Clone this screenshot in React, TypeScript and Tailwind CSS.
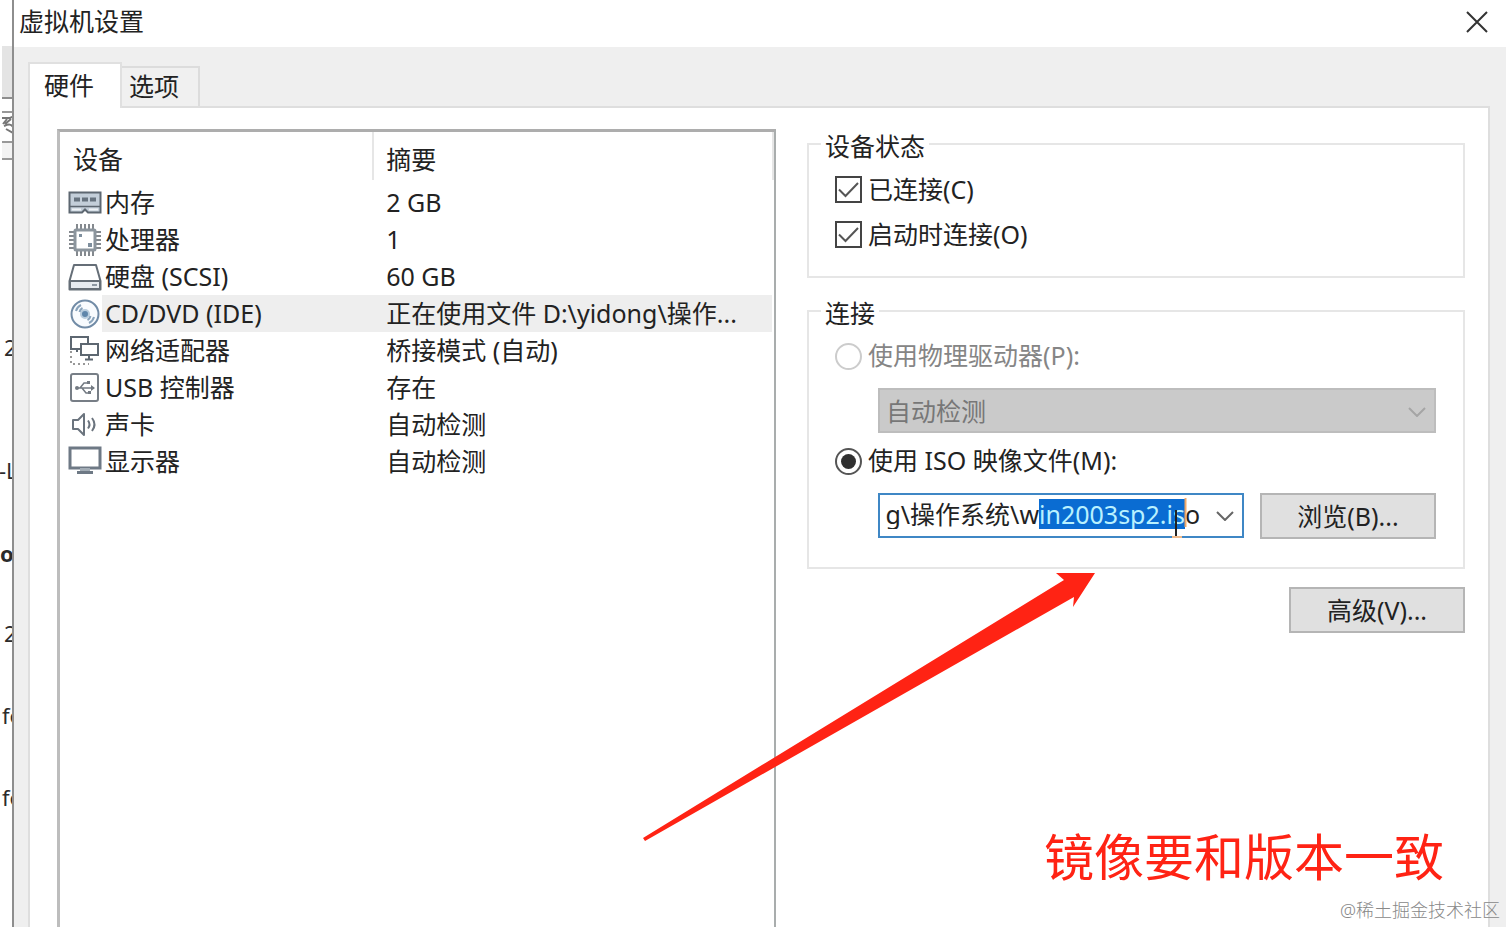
import { useEffect, useRef, type ReactNode } from "react";
import { clsx } from "clsx";

type DeviceIcon = "memory" | "cpu" | "disk" | "disc" | "network" | "usb" | "sound" | "display";

interface Device {
  id: DeviceIcon;
  name: string;
  summary: string;
}

const devices: Device[] = [
  { id: "memory", name: "内存", summary: "2 GB" },
  { id: "cpu", name: "处理器", summary: "1" },
  { id: "disk", name: "硬盘 (SCSI)", summary: "60 GB" },
  { id: "disc", name: "CD/DVD (IDE)", summary: "正在使用文件 D:\\yidong\\操作..." },
  { id: "network", name: "网络适配器", summary: "桥接模式 (自动)" },
  { id: "usb", name: "USB 控制器", summary: "存在" },
  { id: "sound", name: "声卡", summary: "自动检测" },
  { id: "display", name: "显示器", summary: "自动检测" },
];

const selectedDevice: DeviceIcon = "disc";
const isoPath = "D:\\yidong\\操作系统\\win2003sp2.iso";

const deviceIcons: Record<DeviceIcon, ReactNode> = {
  memory: (
    <>
      <path d="M1.5 6.500h31v20H20l-3-3-3 3H1.500z" fill="#c3ced9" stroke="#5d6771" strokeWidth="2" />
      <path d="M2 20.500h30" stroke="#5d6771" strokeWidth="1.500" />
      <path d="M6 11.500h6v4H6zM14 11.500h6v4h-6zM22 11.500h6v4h-6z" fill="#66727e" />
      <path d="M4 23.500h9M21 23.500h9" stroke="#eef2f6" strokeWidth="2" />
    </>
  ),
  cpu: (
    <>
      <path
        d="M9 1v5M13 1v5M17 1v5M21 1v5M25 1v5M9 28v5M13 28v5M17 28v5M21 28v5M25 28v5M1 9h5M1 13h5M1 17h5M1 21h5M1 25h5M28 9h5M28 13h5M28 17h5M28 21h5M28 25h5"
        stroke="#84898e"
        strokeWidth="2"
      />
      <rect x="7" y="7" width="20" height="20" rx="1" fill="#fff" stroke="#8c959d" strokeWidth="3" />
      <path d="M11 11h3v3h-3zM20 20h4v4h-4z" fill="#7f8f9e" />
    </>
  ),
  disk: (
    <>
      <path d="M6 5h22l4.500 16v8.500h-31V21z" fill="#fff" stroke="#656e77" strokeWidth="2" strokeLinejoin="round" />
      <path d="M2 21h30v8H2z" fill="#e6ebf0" stroke="#656e77" strokeWidth="2" />
      <path d="M24 25h5" stroke="#8d98a3" strokeWidth="2" />
    </>
  ),
  disc: (
    <>
      <circle cx="17" cy="17" r="13.500" fill="#f8fbfe" stroke="#718ba6" strokeWidth="2" />
      <circle cx="17" cy="17" r="4" fill="#5f86aa" stroke="#b9cddd" strokeWidth="2" />
      <path d="M8 14a9 9 0 0 1 5-6M11.500 15a6 6 0 0 1 3-4M26 20a9 9 0 0 1-5 6M22.500 19a6 6 0 0 1-3 4" fill="none" stroke="#89a3bb" strokeWidth="2" />
    </>
  ),
  network: (
    <>
      <path d="M3 3h17v12H3zM9 15v3" fill="#fff" stroke="#5d6771" strokeWidth="2" />
      <path d="M13 10h17v11H13zM21 21v4M17 25.500h8" fill="#fff" stroke="#5d6771" strokeWidth="2" />
      <path d="M3 17v13h18" fill="none" stroke="#777" strokeWidth="1.500" strokeDasharray="2 3" />
    </>
  ),
  usb: (
    <>
      <rect x="3" y="3" width="27" height="27" rx="2" fill="#fff" stroke="#777e86" strokeWidth="2" />
      <path d="M8 17h18M12 17l4-5h4M14 17l4 5h4" fill="none" stroke="#737a82" strokeWidth="1.500" />
      <circle cx="9" cy="17" r="2" fill="#737a82" />
      <path d="M23 14l4 3-4 3zM19 10h3v3h-3zM20 20h3v3h-3z" fill="#737a82" />
    </>
  ),
  sound: (
    <>
      <path d="M5 12h5l6-6v21l-6-6H5z" fill="#fff" stroke="#6b747e" strokeWidth="2" strokeLinejoin="round" />
      <path d="M20 12.500q3 4 0 8M24 10q5 6.500 0 13" fill="none" stroke="#6b747e" strokeWidth="2" />
    </>
  ),
  display: (
    <>
      <rect x="2" y="3" width="30" height="20" fill="#fff" stroke="#6e7985" strokeWidth="3" />
      <path d="M12 23h10v4H12z" fill="#a3adb6" />
      <path d="M9 27.500h16" stroke="#6e7985" strokeWidth="3" />
    </>
  ),
};

// pieces of the window behind the dialog that stick out on the left
const backgroundText = [
  { text: "2", className: "mt-[175px] pl-[2px]" },
  { text: "-L", className: "mt-[99px] -ml-[3px]" },
  { text: "o", className: "mt-[59px] -ml-[2px] font-bold" },
  { text: "2", className: "mt-[56px] pl-[2px]" },
  { text: "fe", className: "mt-[58px]" },
  { text: "fe", className: "mt-[58px]" },
];

function Chevron({ className }: { className?: string }) {
  return (
    <svg className={className} width="18" height="10" viewBox="0 0 18 10" fill="none" stroke="currentColor" strokeWidth="2" aria-hidden="true">
      <path d="M1 1l8 8 8-8" />
    </svg>
  );
}

function BackgroundWindow() {
  return (
    <div className="w-3 shrink-0 overflow-hidden pl-[2px] text-[22px] whitespace-nowrap text-[#2b2b2b]" aria-hidden="true">
      <div className="mt-[46px] h-[53px] border-b-2 border-[#8d8d8d] bg-[#e4e4e4]" />
      <div className="mt-3 h-8 border-y-2 border-[#999]">
        <svg width="12" height="22" viewBox="0 0 12 22" fill="none" stroke="#777" strokeWidth="2">
          <path d="M0 5h8l4-2M5 6l-4 5M3 11l6-5M2 13c5-2 7-2 9 1M4 16l7 4" />
        </svg>
      </div>
      <div className="h-[17px] border-b-2 border-[#999] bg-[#f3f3f3]" />
      {backgroundText.map((item, i) => (
        <div key={i} className={clsx("h-6 leading-6", item.className)}>
          {item.text}
        </div>
      ))}
    </div>
  );
}

function DeviceTable() {
  return (
    <div className="min-w-0 border-t-[3px] border-r-2 border-l-[3px] border-t-[#adadad] border-r-[#a9adad] border-l-[#bdbdbd]">
      <table className="w-full table-fixed border-collapse text-left">
        <colgroup>
          <col className="w-[44%]" />
          <col />
        </colgroup>
        <thead>
          <tr className="h-[52px]">
            <th className="p-0 font-normal">
              <div className="mb-1 h-12 border-r-2 border-[#e6e6e6] pl-[13px] leading-[54px]">设备</div>
            </th>
            <th className="p-0 font-normal">
              <div className="mb-1 h-12 border-r-2 border-[#e6e6e6] pl-3 leading-[54px]">摘要</div>
            </th>
          </tr>
        </thead>
        <tbody>
          {devices.map((device) => {
            const selected = device.id === selectedDevice;
            return (
              <tr key={device.id} className="h-[37px]" aria-selected={selected}>
                <td className="p-0">
                  <div className="flex h-[37px] items-center pl-2">
                    <svg className="shrink-0" width="34" height="34" viewBox="0 0 34 34" fill="none" aria-hidden="true">
                      {deviceIcons[device.id]}
                    </svg>
                    <span className={clsx("h-full flex-1 pl-[3px] leading-[37px] whitespace-nowrap", selected && "bg-[#eeeeee]")}>
                      {device.name}
                    </span>
                  </div>
                </td>
                <td className="p-0">
                  <div className={clsx("mr-[2px] h-[37px] truncate pl-3 leading-[37px]", selected && "bg-[#eeeeee]")}>
                    {device.summary}
                  </div>
                </td>
              </tr>
            );
          })}
        </tbody>
      </table>
    </div>
  );
}

function Group({ title, className, children }: { title: string; className?: string; children: ReactNode }) {
  return (
    <fieldset className={clsx("min-w-0 border-2 border-[#e6e6e6]", className)}>
      <legend className="ml-3 h-[30px] px-1 leading-[34px]">{title}</legend>
      {children}
    </fieldset>
  );
}

function Checkbox({ label }: { label: string }) {
  return (
    <label className="flex h-[45px] items-center gap-[6px]">
      <span className="relative flex">
        <input type="checkbox" defaultChecked className="size-[27px] appearance-none border-2 border-[#444] bg-white" />
        <svg className="pointer-events-none absolute top-0 left-0" width="27" height="27" viewBox="0 0 27 27" fill="none" aria-hidden="true">
          <path d="M4 13.500l6.500 6.500L23 7" stroke="#555" strokeWidth="2" />
        </svg>
      </span>
      {label}
    </label>
  );
}

function Radio({ label, checked, disabled }: { label: string; checked?: boolean; disabled?: boolean }) {
  return (
    <label className={clsx("flex h-[34px] items-center gap-[6px]", disabled && "text-[#858585]")}>
      <span className="relative flex">
        <input
          type="radio"
          name="connection"
          defaultChecked={checked}
          disabled={disabled}
          className={clsx("size-[27px] appearance-none rounded-full border-2 bg-white", disabled ? "border-[#cccccc]" : "border-[#555]")}
        />
        {checked && <span className="pointer-events-none absolute inset-[6px] rounded-full bg-[#303030]" />}
      </span>
      {label}
    </label>
  );
}

function IsoCombo() {
  const inputRef = useRef<HTMLInputElement>(null);

  useEffect(() => {
    const input = inputRef.current;
    if (!input) return;
    input.focus();
    input.setSelectionRange(isoPath.indexOf("in2003"), isoPath.length - 1);
    input.scrollLeft = input.scrollWidth;
  }, []);

  return (
    <div className="relative flex h-[45px] min-w-0 flex-1 items-center border-2 border-[#3f87c5] bg-white pr-2 pb-1 pl-[5px]">
      <input
        ref={inputRef}
        aria-label="ISO 映像文件"
        defaultValue={isoPath}
        className="h-[30px] min-w-0 flex-1 leading-[30px] caret-transparent outline-none selection:bg-[#0a6cd2] selection:text-[#b9f1ff]"
      />
      <button type="button" aria-label="打开列表" className="ml-4 pt-1 text-[#666]">
        <Chevron />
      </button>
      <svg className="pointer-events-none absolute right-[52px] -bottom-[2px]" width="18" height="40" viewBox="0 0 18 40" fill="none" aria-hidden="true">
        <path d="M13.500 0v29" stroke="#f0a868" strokeWidth="2" />
        <path d="M4 12V38" stroke="#222" strokeWidth="2" />
        <path d="M0 39h10" stroke="#f0b98a" strokeWidth="2" />
      </svg>
    </div>
  );
}

function PushButton({ children }: { children: ReactNode }) {
  return (
    <button type="button" className="h-[46px] w-44 shrink-0 border-2 border-[#b5b5b5] bg-[#e0e0e0] pt-[2px]">
      {children}
    </button>
  );
}

export default function App() {
  return (
    <div
      lang="zh-CN"
      className="relative flex min-h-screen overflow-hidden bg-white font-['Noto_Sans','Noto_Sans_CJK_SC',sans-serif] text-[25px] text-[#222]"
    >
      <BackgroundWindow />
      <main className="flex min-w-0 flex-1 flex-col border-l-2 border-[#8e8e8e] bg-[#efefef]">
        <header className="flex h-[47px] items-center justify-between bg-white pr-[18px] pb-1 pl-[5px]">
          <h1>虚拟机设置</h1>
          <button type="button" aria-label="关闭">
            <svg width="22" height="22" viewBox="0 0 22 22" fill="none" stroke="#333" strokeWidth="2" aria-hidden="true">
              <path d="M1 1l20 20M21 1L1 21" />
            </svg>
          </button>
        </header>

        <div className="flex flex-1 flex-col pt-[15px] pr-4 pl-[14px]">
          <div role="tablist" className="flex items-end">
            <button type="button" role="tab" aria-selected="true" className="relative z-10 -mb-[2px] h-[46px] w-[94px] border-2 border-b-0 border-[#e0e0e0] bg-white pr-3">
              硬件
            </button>
            <button type="button" role="tab" aria-selected="false" className="h-10 w-[78px] border-t-2 border-r-2 border-[#dcdcdc] bg-[#f0f0f0] pr-3">
              选项
            </button>
          </div>

          <div className="grid flex-1 grid-cols-[719fr_658fr] gap-[31px] border-2 border-b-0 border-[#dedede] bg-white pt-[21px] pr-[23px] pl-[27px]">
            <DeviceTable />

            <div className="flex min-w-0 flex-col">
              <Group title="设备状态" className="pb-[19px]">
                <div className="pt-2 pl-[26px]">
                  <Checkbox label="已连接(C)" />
                  <Checkbox label="启动时连接(O)" />
                </div>
              </Group>

              <Group title="连接" className="mt-[18px] pb-[29px]">
                <div className="pt-[13px] pr-[27px] pl-[26px]">
                  <Radio label="使用物理驱动器(P):" disabled />
                  <div className="relative mt-[15px] ml-[43px]">
                    <select
                      disabled
                      aria-label="物理驱动器"
                      className="block h-[45px] w-full appearance-none border-2 border-[#bdbdbd] bg-[#cacaca] pt-[2px] pl-[6px] text-[#777] opacity-100"
                    >
                      <option>自动检测</option>
                    </select>
                    <Chevron className="pointer-events-none absolute top-[19px] right-[10px] text-[#a5a5a5]" />
                  </div>
                  <div className="mt-[11px]">
                    <Radio label="使用 ISO 映像文件(M):" checked />
                  </div>
                  <div className="mt-[15px] ml-[43px] flex h-[45px] gap-4">
                    <IsoCombo />
                    <PushButton>浏览(B)...</PushButton>
                  </div>
                </div>
              </Group>

              <div className="mt-[18px] flex justify-end">
                <PushButton>高级(V)...</PushButton>
              </div>
            </div>
          </div>
        </div>
      </main>

      <svg className="pointer-events-none absolute top-[573px] left-[643px]" width="453" height="269" viewBox="0 0 453 269" aria-hidden="true">
        <path d="M0 265L421 7L413 0H452L430 34L431 24L2 268Z" fill="#ff2314" />
      </svg>
      <p className="absolute right-[62px] bottom-10 text-[50px] leading-[60px] text-[#ff2314]">镜像要和版本一致</p>
      <p className="absolute right-[6px] bottom-[5px] text-lg leading-6 font-light text-[#888]">@稀土掘金技术社区</p>
    </div>
  );
}
